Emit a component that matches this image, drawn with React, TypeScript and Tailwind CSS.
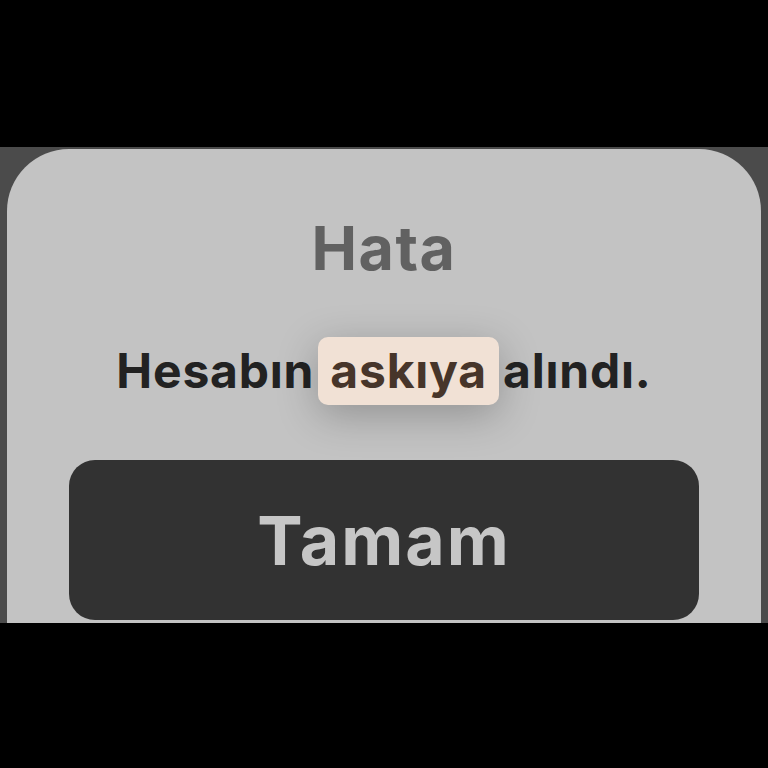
export default function App() {
  return (
    <div className="w-[768px] h-[768px] bg-black flex flex-col overflow-hidden" style={{ fontFamily: '"Inter", "Open Sans", sans-serif' }}>
      <div className="h-[147px] shrink-0" />
      <div className="h-[476px] shrink-0 bg-[#4b4b4b] px-[7px] pt-[2px] overflow-hidden">
        <div className="h-[520px] bg-[#c3c3c3] rounded-t-[62px] flex flex-col items-center">
          <h1 className="mt-[67px] h-[64px] flex items-center text-[61px] tracking-[1.5px] leading-none font-bold text-[#616161]">Hata</h1>
          <p className="mt-[57px] flex items-center text-[48px] tracking-[0.8px] font-bold text-[#222222] leading-none">
            <span>Hesabın</span>
            <span className="mx-[4px] px-[12px] h-[68px] flex items-center rounded-[10px] bg-[#f1e1d5] text-[#47352a] shadow-[0_10px_40px_rgba(0,0,0,0.25)]">askıya</span>
            <span>alındı.</span>
          </p>
          <button className="mt-[55px] w-[630px] h-[160px] shrink-0 rounded-[26px] bg-[#323232] text-[#c6c6c6] text-[68px] tracking-[2px] font-bold leading-none">Tamam</button>
        </div>
      </div>
    </div>
  );
}
